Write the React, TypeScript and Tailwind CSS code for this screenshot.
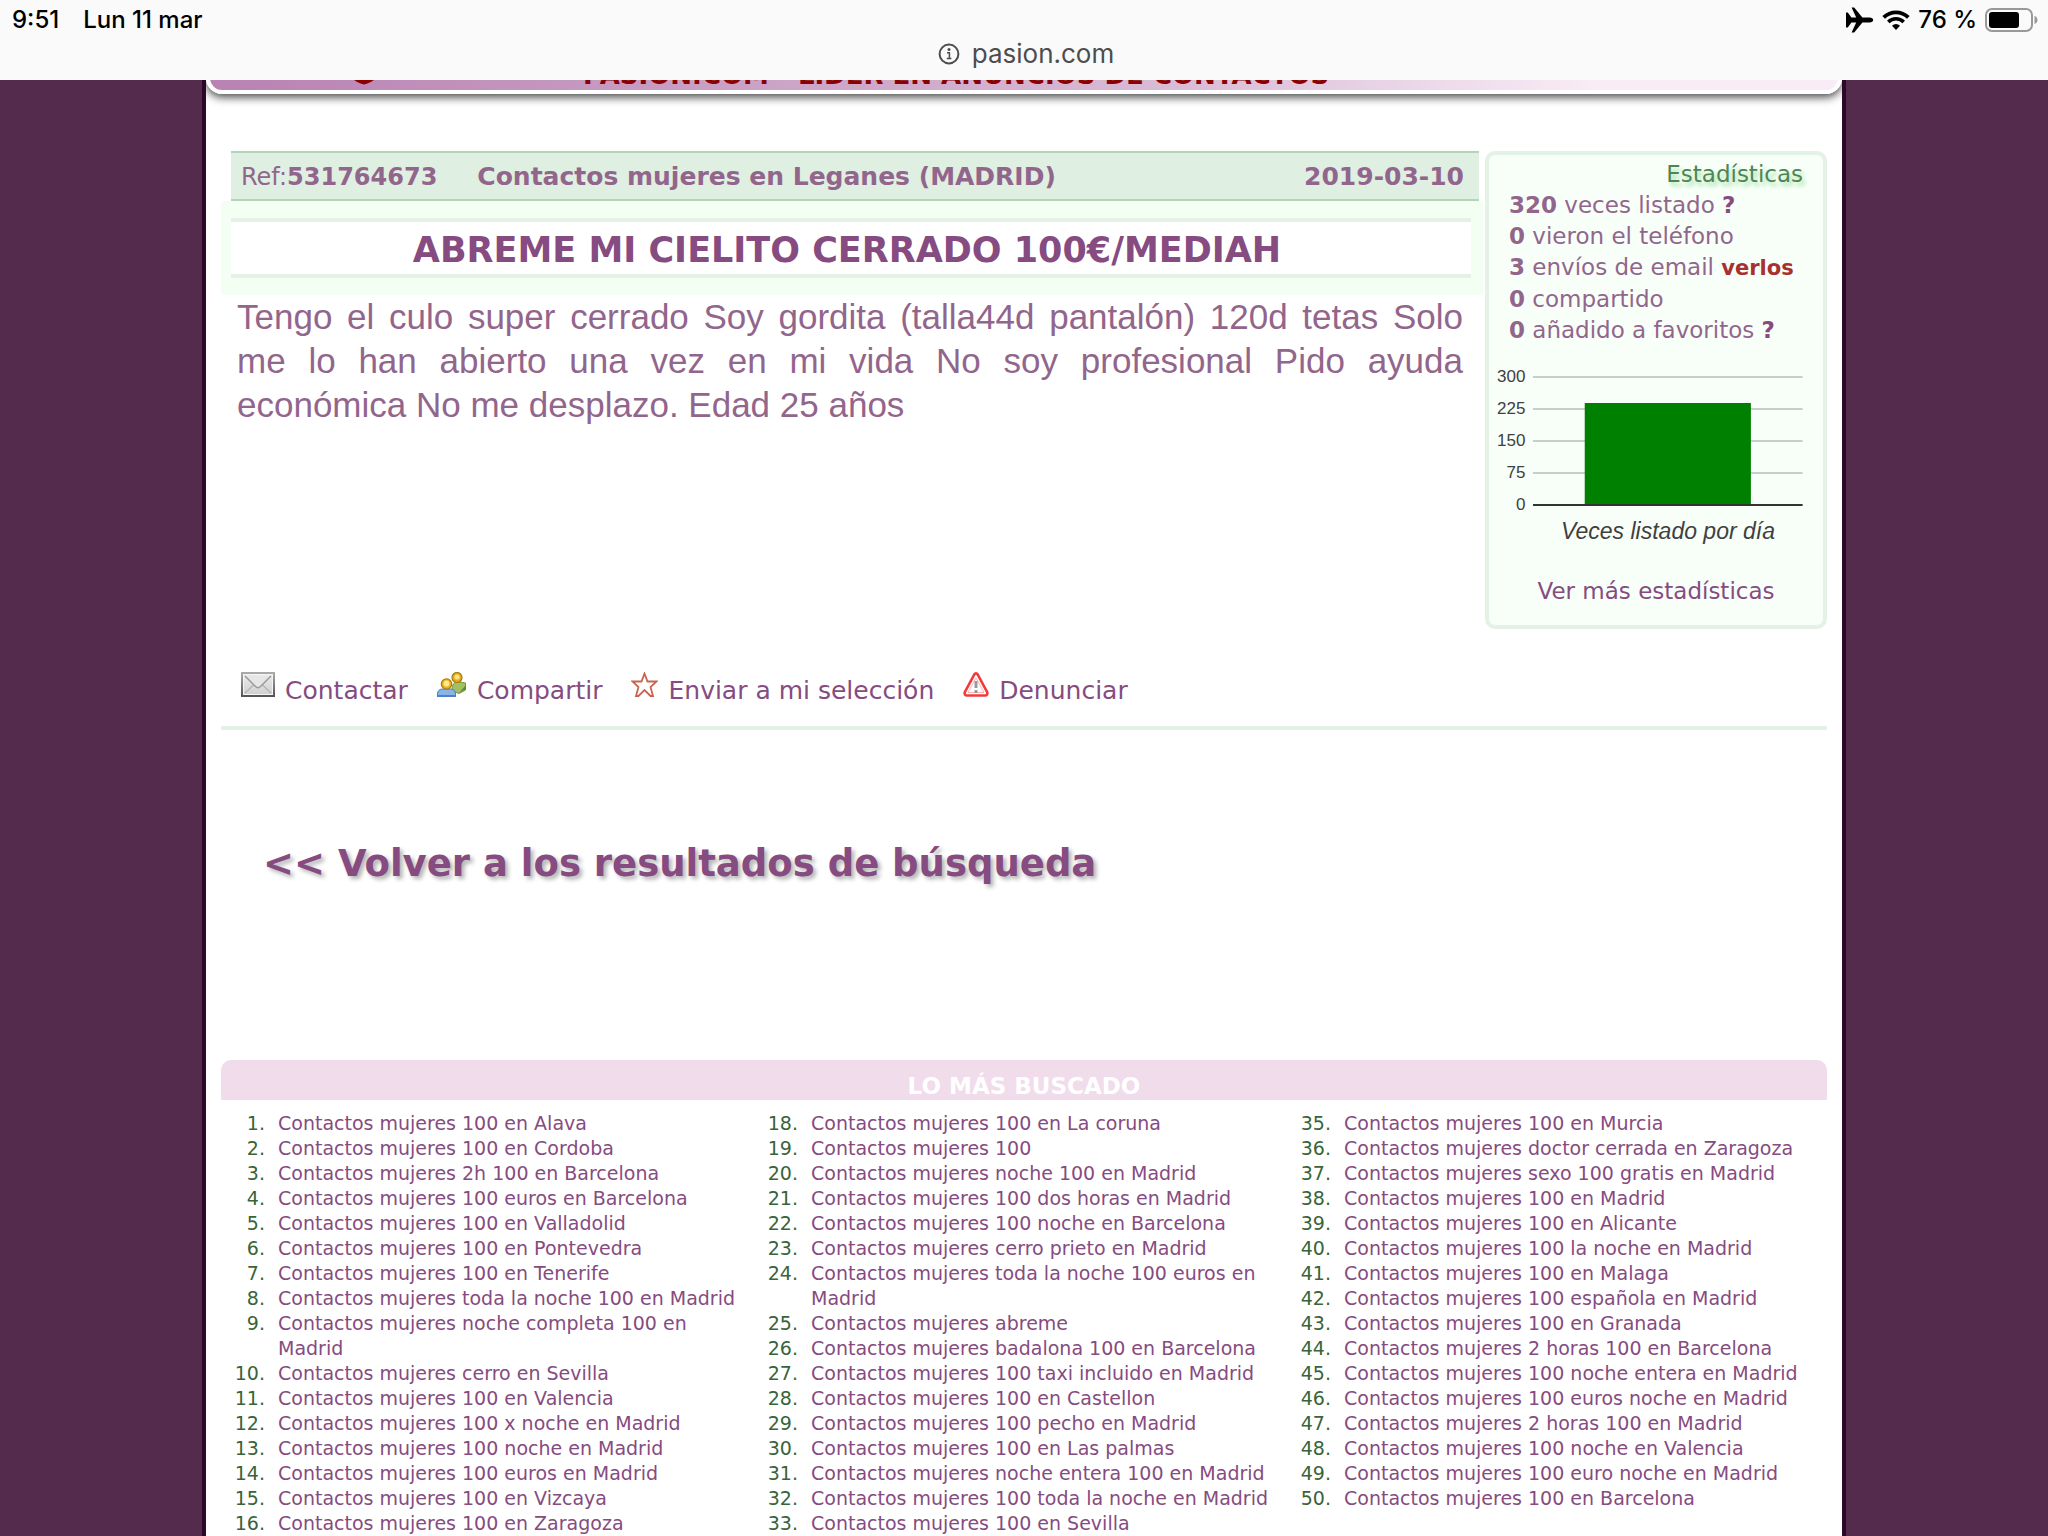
import React from 'react';

const stats = [
    { value: 320, label: 'veces listado', help: true },
    { value: 0, label: 'vieron el teléfono' },
    { value: 3, label: 'envíos de email', link: 'verlos' },
    { value: 0, label: 'compartido' },
    { value: 0, label: 'añadido a favoritos', help: true },
];

const ticks = [300, 225, 150, 75, 0];

const searches = [
    {
        start: 1,
        items: [
            '100 en Alava',
            '100 en Cordoba',
            '2h 100 en Barcelona',
            '100 euros en Barcelona',
            '100 en Valladolid',
            '100 en Pontevedra',
            '100 en Tenerife',
            'toda la noche 100 en Madrid',
            'noche completa 100 en Madrid',
            'cerro en Sevilla',
            '100 en Valencia',
            '100 x noche en Madrid',
            '100 noche en Madrid',
            '100 euros en Madrid',
            '100 en Vizcaya',
            '100 en Zaragoza',
        ],
    },
    {
        start: 18,
        items: [
            '100 en La coruna',
            '100',
            'noche 100 en Madrid',
            '100 dos horas en Madrid',
            '100 noche en Barcelona',
            'cerro prieto en Madrid',
            'toda la noche 100 euros en Madrid',
            'abreme',
            'badalona 100 en Barcelona',
            '100 taxi incluido en Madrid',
            '100 en Castellon',
            '100 pecho en Madrid',
            '100 en Las palmas',
            'noche entera 100 en Madrid',
            '100 toda la noche en Madrid',
            '100 en Sevilla',
        ],
    },
    {
        start: 35,
        items: [
            '100 en Murcia',
            'doctor cerrada en Zaragoza',
            'sexo 100 gratis en Madrid',
            '100 en Madrid',
            '100 en Alicante',
            '100 la noche en Madrid',
            '100 en Malaga',
            '100 española en Madrid',
            '100 en Granada',
            '2 horas 100 en Barcelona',
            '100 noche entera en Madrid',
            '100 euros noche en Madrid',
            '2 horas 100 en Madrid',
            '100 noche en Valencia',
            '100 euro noche en Madrid',
            '100 en Barcelona',
        ],
    },
];

const StatusBar = () => (
    <header className="h-20 bg-[#fafafa] font-['Inter',sans-serif] text-black">
        <div className="flex h-10 items-center justify-between pl-3 pr-2.5 text-2xl font-medium leading-10">
            <div className="flex gap-6">
                <span>9:51</span>
                <span>Lun 11 mar</span>
            </div>
            <div className="flex items-center gap-2">
                <svg width="29" height="26" viewBox="0 0 29 26" aria-hidden="true">
                    <path
                        d="M1 5.500h1.800L6.400 10.600H11.200L6.600.600h2.600L17.400 10.600H24.500c2.200 0 3.700 1.200 3.700 2.400s-1.500 2.400-3.700 2.400H17.400L9.200 25.400H6.600L11.200 15.400H6.400L2.800 20.500H1z"
                        fill="#000"
                    />
                </svg>
                <svg width="28" height="21" viewBox="0 0 28 21" aria-hidden="true">
                    <path d="M1.700 7.400a17.400 17.400 0 0 1 24.600 0" fill="none" stroke="#000" strokeWidth="3.800" />
                    <path d="M6.300 12a10.900 10.900 0 0 1 15.400 0" fill="none" stroke="#000" strokeWidth="3.600" />
                    <path d="M10 15.800a5.600 5.600 0 0 1 8 0L14 20z" fill="#000" />
                </svg>
                <span>76 %</span>
                <svg width="53" height="24" viewBox="0 0 53 24" aria-hidden="true">
                    <rect x="1" y="1" width="46" height="22" rx="6" fill="none" stroke="#999" strokeWidth="2" />
                    <rect x="4" y="4" width="30" height="16" rx="3" fill="#000" />
                    <path d="M49.500 8c2 .6 3 2.200 3 4s-1 3.400-3 4z" fill="#999" />
                </svg>
            </div>
        </div>
        <div className="flex h-7 items-center justify-center gap-3 pl-1 text-[26px] leading-7 text-[#4d4d4d]">
            <svg width="22" height="22" viewBox="0 0 22 22" aria-hidden="true">
                <circle cx="11" cy="11" r="9.400" fill="none" stroke="#4d4d4d" strokeWidth="2" />
                <circle cx="11" cy="6.600" r="1.500" fill="#4d4d4d" />
                <path d="M9 9.800h2.400v5.200M8.800 15.500h4.600" fill="none" stroke="#4d4d4d" strokeWidth="1.500" />
            </svg>
            <span>pasion.com</span>
        </div>
    </header>
);

const Banner = () => (
    <div className="-mt-10 flex h-[54px] items-end rounded-b-2xl border-4 border-white bg-linear-to-r from-[#b882b2] via-[#d9bcd6] via-60% to-[#f9ecf6] to-85% pb-[3px] shadow-[0_3px_10px_rgba(0,0,0,0.75)]">
        <svg className="ml-[139px] mr-[204px] shrink-0" width="30" height="28" viewBox="0 0 30 28" aria-hidden="true">
            <path d="M15 25.500C10 24.500 5 22 2.500 18C0 13 1 8 3 6a7 7 0 0 1 12 0a7 7 0 0 1 12 0c2 2 3 7 .5 12C25 22 20 24.500 15 25.500z" fill="#8b0000" />
        </svg>
        <p className="whitespace-nowrap text-[26px] font-bold leading-6 text-[#8b0000]">
            PASION.COM - LIDER EN ANUNCIOS DE CONTACTOS
        </p>
    </div>
);

const Ad = () => (
    <article className="min-w-0 flex-1">
        <div className="ml-2.5 mr-1 flex h-[50px] items-center border-y-2 border-[#b1d5b8] bg-[#dfefe1] pl-2.5 pr-[15px] pt-0.5 text-[25px]">
            <span className="text-2xl">
                Ref:<b>531764673</b>
            </span>
            <b className="ml-10">Contactos mujeres en Leganes (MADRID)</b>
            <b className="ml-auto">2019-03-10</b>
        </div>
        <div className="bg-[#f3fff3] py-[17px] pl-2.5 pr-3">
            <h1 className="border-y-4 border-[#e5f1e6] bg-white pr-2 pt-1 text-center text-[35px] font-bold leading-[48px] text-[#864b80]">
                ABREME MI CIELITO CERRADO 100€/MEDIAH
            </h1>
        </div>
        <p className="ml-4 mr-5 text-justify font-['Liberation_Sans',Arial,sans-serif] text-[35px] leading-[44px]">
            Tengo el culo super cerrado Soy gordita (talla44d pantalón) 120d tetas Solo me lo han abierto una vez en
            mi vida No soy profesional Pido ayuda económica No me desplazo. Edad 25 años
        </p>
    </article>
);

const Chart = () => (
    <figure className="mt-[15px] font-['Liberation_Sans',Arial,sans-serif] text-[#404040]">
        <div className="flex gap-2 pl-2 pr-5">
            <div className="text-right text-[17px] leading-8">
                {ticks.map((tick) => (
                    <div key={tick}>{tick}</div>
                ))}
            </div>
            <svg className="mt-3.5 h-[132px] flex-1" viewBox="0 0 271 132" preserveAspectRatio="none" aria-hidden="true">
                <path d="M0 2H271M0 34H271M0 66H271M0 98H271" stroke="#ccc" strokeWidth="2" />
                <rect x="52" y="28" width="167" height="102" fill="green" />
                <path d="M0 130H271" stroke="#333" strokeWidth="2" />
            </svg>
        </div>
        <figcaption className="pl-6 text-center text-[23px] italic leading-5">Veces listado por día</figcaption>
    </figure>
);

const Stats = () => (
    <aside className="h-[478px] w-[342px] shrink-0 rounded-[10px] border-4 border-[#e4f1e5] bg-[#f8fff9]">
        <h2 className="pr-5 pt-[3px] text-right text-[23px] leading-8 text-[#4f8553] [text-shadow:3px_4px_4px_#a5e0a8]">
            Estadísticas
        </h2>
        <ul className="whitespace-nowrap pl-5 text-[23px] leading-[31px]">
            {stats.map((stat) => (
                <li key={stat.label}>
                    <b>{stat.value}</b> {stat.label}{' '}
                    {stat.help && (
                        <a href="#ayuda" className="font-bold text-[#864b80]">
                            ?
                        </a>
                    )}
                    {stat.link && (
                        <a href="#verlos" className="text-[21px] font-bold text-[#a93030]">
                            {stat.link}
                        </a>
                    )}
                </li>
            ))}
        </ul>
        <Chart />
        <a href="#estadisticas" className="mt-[34px] block text-center text-[23px] leading-8 text-[#864b80]">
            Ver más estadísticas
        </a>
    </aside>
);

const MailIcon = () => (
    <svg width="34" height="25" viewBox="0 0 34 25" aria-hidden="true">
        <defs>
            <linearGradient id="mail" x1="0" y1="0" x2="0" y2="1">
                <stop offset="0" stopColor="#ececec" />
                <stop offset="1" stopColor="#cfcfcf" />
            </linearGradient>
            <linearGradient id="mailEdge" x1="0" y1="0" x2="0" y2="1">
                <stop offset="0" stopColor="#aaa" />
                <stop offset="1" stopColor="#555" />
            </linearGradient>
        </defs>
        <rect x="1" y="1" width="32" height="23" fill="url(#mail)" stroke="url(#mailEdge)" strokeWidth="2" />
        <rect x="2.500" y="2.500" width="29" height="20" fill="none" stroke="#f4f4f4" />
        <path d="M4 21l9-8.500M30 21l-9-8.500" stroke="#b5b5b5" strokeWidth="1.300" />
        <path d="M4 4l10.500 10.500q2.500 2.200 5 0L30 4" fill="#e6e6e6" stroke="#9a9a9a" strokeWidth="1.500" />
    </svg>
);

const ShareIcon = () => (
    <svg width="30" height="25" viewBox="0 0 30 25" aria-hidden="true">
        <path d="M15 19c0-5 1-8 4-9h4l5.500 1v7L22 21.500z" fill="#a3bf63" stroke="#6f9a3a" />
        <path d="M22 21l7-4v-4z" fill="#5f8a2c" />
        <circle cx="20" cy="5.500" r="5" fill="#e5ab1c" stroke="#a87c18" strokeWidth="1.200" />
        <circle cx="20" cy="5" r="2.600" fill="#ffe47a" />
        <path d="M.500 25v-3c0-3 2-5 5-5h8c3 0 5 2 5 5v3z" fill="#8ab4e6" stroke="#4a7cc0" />
        <path d="M1 23h17.500v2H1z" fill="#4a80cc" />
        <circle cx="9.500" cy="12" r="5.200" fill="#eeb11c" stroke="#a87c18" strokeWidth="1.200" />
        <circle cx="9.500" cy="11.500" r="2.900" fill="#ffeb8c" />
    </svg>
);

const StarIcon = () => (
    <svg width="27" height="25" viewBox="0 0 27 25" aria-hidden="true">
        <path
            d="M13.500 1.500L16.500 9.500H25.500L19.500 15L22 24H19.500L13.500 18L7.500 24H5L7.500 15L1.500 9.500H10.500z"
            fill="#fff"
            stroke="#c9644e"
            strokeWidth="1.800"
        />
    </svg>
);

const WarningIcon = () => (
    <svg width="26" height="25" viewBox="0 0 26 25" aria-hidden="true">
        <path
            d="M11.200 2.600q1.800-2.400 3.600 0L24.300 20.500q.5 3-2.300 3H4q-2.800 0-2.300-3z"
            fill="#fff"
            stroke="#f23a3a"
            strokeWidth="2.600"
        />
        <path d="M13 6L21 20.500H5z" fill="none" stroke="#f7b5b5" />
        <path d="M13 9v7M13 18v3" stroke="#999" strokeWidth="3" />
    </svg>
);

const actions = [
    { label: 'Contactar', href: '#contactar', Icon: MailIcon },
    { label: 'Compartir', href: '#compartir', Icon: ShareIcon },
    { label: 'Enviar a mi selección', href: '#seleccion', Icon: StarIcon },
    { label: 'Denunciar', href: '#denunciar', Icon: WarningIcon },
];

const TopSearches = () => (
    <section>
        <h2 className="h-10 rounded-t-[10px] bg-[#f0dceb] pt-1.5 text-center text-[23px] font-bold leading-10 text-white">
            LO MÁS BUSCADO
        </h2>
        <div className="grid grid-cols-3 pr-[7px] pt-[11px] text-[19px] leading-[25px]">
            {searches.map((column) => (
                <ol key={column.start} className="pr-3">
                    {column.items.map((item, idx) => (
                        <li key={item} className="flex gap-[13px]">
                            <span className="w-11 shrink-0 text-right text-[#38643a]">{column.start + idx}.</span>
                            <a href="#buscar" className="text-[#864b80]">
                                Contactos mujeres {item}
                            </a>
                        </li>
                    ))}
                </ol>
            ))}
        </div>
    </section>
);

const App = () => {
    return (
        <div className="flex h-screen flex-col overflow-hidden bg-[#542b4d] font-['DejaVu_Sans',Verdana,sans-serif] text-[#92668c]">
            <StatusBar />
            <main className="mx-auto w-full max-w-[1644px] flex-1 overflow-hidden border-x-4 border-[#2b0826] bg-white">
                <Banner />
                <div className="px-[15px] pt-[57px]">
                    <div className="flex gap-0.5">
                        <Ad />
                        <Stats />
                    </div>
                    <nav className="mt-[43px] flex gap-[29px] border-b-4 border-[#e4f1e5] pb-[23px] pl-5 text-[25px] leading-[25px]">
                        {actions.map(({ label, href, Icon }) => (
                            <a key={label} href={href} className="flex gap-2.5 text-[#864b80]">
                                <Icon />
                                <span className="pt-1.5">{label}</span>
                            </a>
                        ))}
                    </nav>
                    <div className="pb-[172px] pl-[42px] pt-[110px]">
                        <a
                            href="#resultados"
                            className="text-[37px] font-bold leading-[48px] text-[#864b80] [text-shadow:3px_3px_4px_rgba(0,0,0,0.3)]"
                        >
                            &lt;&lt; Volver a los resultados de búsqueda
                        </a>
                    </div>
                    <TopSearches />
                </div>
            </main>
        </div>
    );
};

export default App;
